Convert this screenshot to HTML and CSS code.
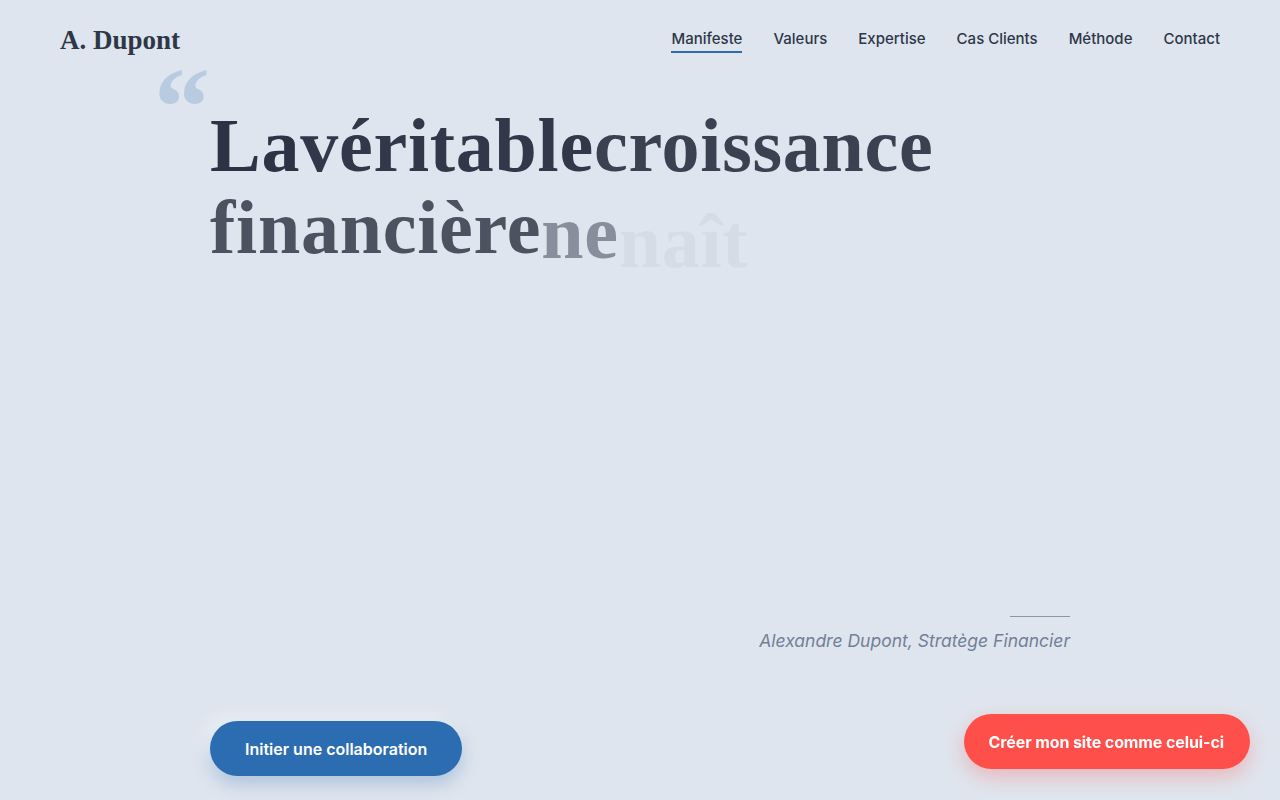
FILE: index.html
```html
<!DOCTYPE html>
<html lang="fr">
<head>
<meta charset="utf-8">
<title>A. Dupont</title>
<link rel="stylesheet" href="styles.css">
</head>
<body>
<header class="site-header">
  <div class="logo">A. Dupont</div>
  <nav class="nav">
    <a class="nav-link active" href="#">Manifeste</a>
    <a class="nav-link" href="#">Valeurs</a>
    <a class="nav-link" href="#">Expertise</a>
    <a class="nav-link" href="#">Cas Clients</a>
    <a class="nav-link" href="#">Méthode</a>
    <a class="nav-link" href="#">Contact</a>
  </nav>
</header>
<main class="hero">
  <div class="quote-block">
    <span class="quote-mark">“</span>
    <h1 class="headline"><span class="w w1">La</span><span class="w w2">véritable</span><span class="w w3">croissance</span><span class="w w4">financière</span><span class="w w5">ne</span><span class="w w6">naît</span></h1>
  </div>
  <div class="author">
    <span class="author-rule"></span>
    <p class="author-name">Alexandre Dupont, Stratège Financier</p>
  </div>
  <div class="cta-row">
    <a class="btn-primary" href="#">Initier une collaboration</a>
  </div>
</main>
<a class="btn-float" href="#">Créer mon site comme celui-ci</a>
</body>
</html>
```

FILE: styles.css
```css
* { box-sizing: border-box; }
html, body { margin: 0; padding: 0; }
body {
  background: #dfe5ee;
  font-family: "Inter", "Liberation Sans", sans-serif;
  color: #2d3748;
  height: 800px;
  overflow: hidden;
}
.site-header {
  display: flex;
  justify-content: space-between;
  align-items: center;
  padding: 22px 60px 0 60px;
  height: 58px;
}
.logo {
  font-family: "Liberation Serif", "Times New Roman", serif;
  font-weight: 700;
  font-size: 27px;
  color: #2d3748;
  line-height: 36px;
}
.nav {
  display: flex;
  gap: 31px;
  align-items: center;
}
.nav-link {
  font-size: 15px;
  font-weight: 500;
  color: #2d3748;
  text-decoration: none;
  line-height: 20px;
  padding-bottom: 2px;
  border-bottom: 2px solid transparent;
  margin-top: 2px;
}
.nav-link.active { border-bottom-color: #2b6cb0; }
.hero {
  width: 860px;
  margin: 0 auto;
  display: flex;
  flex-direction: column;
  padding-top: 46px;
}
.quote-block { position: relative; }
.quote-mark {
  position: absolute;
  left: -56px;
  top: -53px;
  font-family: "Liberation Serif", "Times New Roman", serif;
  font-weight: 700;
  font-size: 112px;
  line-height: 1;
  color: #b9cbe0;
}
.headline {
  margin: 0;
  font-family: "Liberation Serif", "Times New Roman", serif;
  font-weight: 700;
  font-size: 76px;
  line-height: 82px;
  letter-spacing: 0.75px;
  display: flex;
  flex-wrap: wrap;
  width: 740px;
}
.w { display: inline-block; }
.w1 { color: #2b3345; }
.w2 { color: #30384a; }
.w3 { color: #3a4252; }
.w4 { color: #4b5361; }
.w5 { color: #4f5766; opacity: 0.6; transform: translateY(5px); }
.w6 { color: #5a6272; opacity: 0.06; transform: translateY(14px); }
.author {
  margin-top: 348px;
  display: flex;
  flex-direction: column;
  align-items: flex-end;
}
.author-rule {
  display: block;
  width: 60px;
  height: 1px;
  background: #8a96a8;
}
.author-name {
  margin: 11px 0 0 0;
  font-size: 17.5px;
  line-height: 25px;
  font-style: italic;
  color: #718096;
}
.cta-row {
  margin-top: 68px;
  display: flex;
}
.btn-primary {
  display: inline-flex;
  align-items: center;
  justify-content: center;
  height: 55px;
  padding: 0 35px;
  border-radius: 28px;
  background: #2c6db1;
  color: #ffffff;
  font-size: 16px;
  font-weight: 600;
  text-decoration: none;
  box-shadow: 0 8px 18px rgba(43, 108, 176, 0.28), -6px -6px 14px rgba(255, 255, 255, 0.5);
}
.btn-float {
  position: fixed;
  right: 30px;
  bottom: 31px;
  display: inline-flex;
  align-items: center;
  justify-content: center;
  height: 55px;
  padding: 0 26px 0 25px;
  border-radius: 28px;
  background: #ff4f4a;
  color: #ffffff;
  font-size: 16px;
  font-weight: 700;
  letter-spacing: -0.1px;
  text-decoration: none;
  box-shadow: 0 8px 20px rgba(255, 79, 74, 0.3);
}
```
